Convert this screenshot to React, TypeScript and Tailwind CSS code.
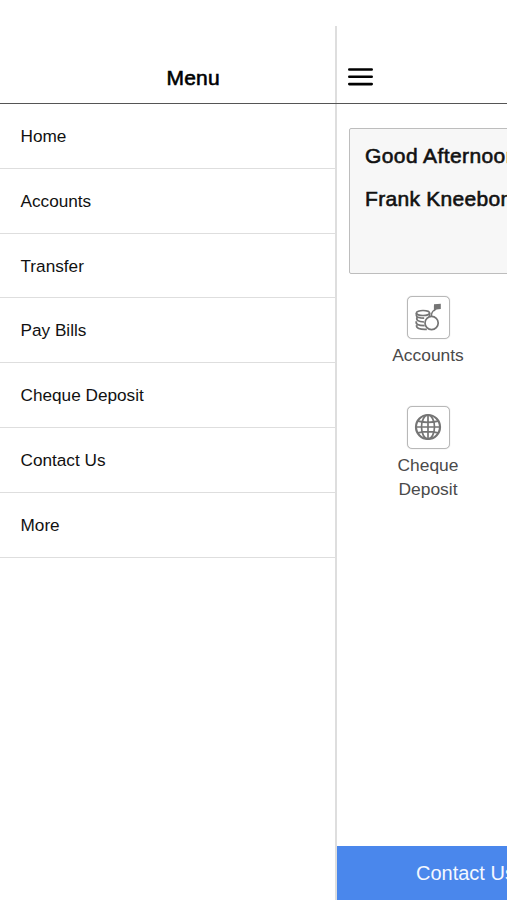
import React from "react";

const menuItems = ["Home", "Accounts", "Transfer", "Pay Bills", "Cheque Deposit", "Contact Us", "More"];

function CoinsIcon() {
  return (
    <svg viewBox="0 0 28 30" className="h-[30px] w-7 shrink-0" fill="none" stroke="#757575" strokeWidth="1.7">
      <ellipse cx="9" cy="10" rx="6.6" ry="2.5" />
      <path d="M2.4 10v2.6c0 1.6 3 2.6 7.8 2.6M3 14.2c-1 3 1 4.6 7 4.8M2.4 18.2c-1 2.8 1.4 4.4 8.2 4.4M2.6 22.2c-.6 3 3 4.6 10.2 4.2M15.6 10v3.4" />
      <circle cx="17.6" cy="20" r="6.6" fill="#fff" />
      <path d="M17.6 13.2c-.5-3 .2-4.5 3-6.5V2.5" strokeWidth="1.4" />
      <path d="M20 1.2l6.8-.4v5.2l-4.2.6-2.6 2z" fill="#757575" stroke="none" />
    </svg>
  );
}

function GlobeIcon() {
  return (
    <svg viewBox="0 0 28 28" className="size-7 shrink-0" fill="none" stroke="#757575" strokeWidth="1.7">
      <circle cx="14" cy="14" r="12" strokeWidth="2.2" />
      <ellipse cx="14" cy="14" rx="6.5" ry="12" />
      <path d="M14 2v24M2 14h24M4 8.2c6 1.4 14 1.4 20 0M4 19.8c6-1.4 14-1.4 20 0" />
    </svg>
  );
}

function Tile({ label, children }: { label: string; children: React.ReactNode }) {
  return (
    <div className="flex w-20 flex-col items-center">
      <div className="flex size-[43px] items-center justify-center rounded-[5px] border-[1.5px] border-[#b8b8b8] bg-white shadow-[0_0_1px_#bbb]">
        {children}
      </div>
      <div className="mt-1 text-center text-[17.4px] leading-[24.5px] text-[#4a4a4a]">{label}</div>
    </div>
  );
}

export default function App() {
  return (
    <div className="flex h-[900px] w-[507px] flex-col overflow-hidden bg-white pt-[26px] font-['Liberation_Sans',Arial,sans-serif] text-[#111]">
      <div className="flex flex-1">
        <aside className="flex w-[335px] shrink-0 flex-col">
          <header className="flex h-[78px] items-end border-b border-[#555] pb-[13px] pl-[166.5px]">
            <h1 className="text-[21px] leading-6 tracking-[0.2px] text-black [-webkit-text-stroke:0.6px_black]">Menu</h1>
          </header>
          <nav>
            {menuItems.map((item) => (
              <div key={item} className="flex h-[64.8px] items-center border-b border-[#dedede] pl-[20.5px] pt-[2px] text-[17.2px]">
                {item}
              </div>
            ))}
          </nav>
        </aside>
        <div className="flex w-[2px] shrink-0 flex-col">
          <div className="h-[78px] border-b border-[#555] bg-[#dedede]" />
          <div className="flex-1 bg-[#dedede]" />
        </div>
        <main className="flex w-[170px] shrink-0 flex-col overflow-hidden">
          <header className="flex h-[78px] shrink-0 items-end border-b border-[#555] pb-[17px] pl-[11px]">
            <svg viewBox="0 0 25 19" className="h-[19px] w-[25px]" stroke="#000" strokeWidth="2.6" strokeLinecap="round">
              <path d="M1.3 2.5h22.4M1.3 9.8h22.4M1.3 17.1h22.4" />
            </svg>
          </header>
          <section className="ml-3 mt-6 h-[146px] w-[340px] shrink-0 whitespace-nowrap rounded-[2px] border border-[#bdbdbd] bg-[#f7f7f7] pl-[15px] pt-[15px] text-[21px] leading-6 tracking-[0.4px] text-[#111] [-webkit-text-stroke:0.6px_#111]">
            <p>Good Afternoon</p>
            <p className="mt-[19px] tracking-[0.3px]">Frank Kneebone</p>
          </section>
          <div className="ml-[51px] mt-[22px] flex flex-col gap-[38px]">
            <Tile label="Accounts">
              <CoinsIcon />
            </Tile>
            <Tile label="Cheque Deposit">
              <GlobeIcon />
            </Tile>
          </div>
          <footer className="mt-auto flex h-[54px] shrink-0 items-center whitespace-nowrap bg-[#4a87ec] pl-[79px] text-[20px] text-[#f4f8ff]">
            Contact Us
          </footer>
        </main>
      </div>
    </div>
  );
}
